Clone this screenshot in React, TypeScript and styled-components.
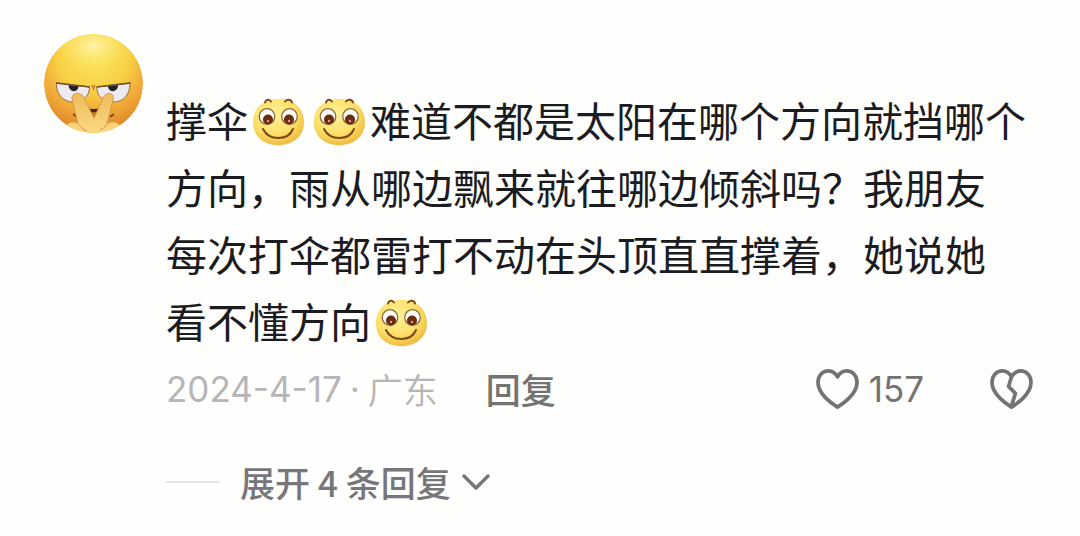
import React from "react";
import styled, { createGlobalStyle } from "styled-components";

const GlobalStyle = createGlobalStyle`
  *, *::before, *::after { box-sizing: border-box; }
  body {
    margin: 0;
    background: #fefefd;
    font-family: Inter, "Noto Sans CJK SC", sans-serif;
  }
`;

const Comment = styled.article`
  display: flex;
  align-items: flex-start;
  gap: 22px;
  padding: 34px 47px 28px 44px;
`;

const Avatar = styled.svg`
  flex: none;
  width: 100px;
  height: 100px;
`;

const Content = styled.div`
  flex: 1;
  min-width: 0;
  padding-top: 52px;
`;

const Message = styled.p`
  margin: 0;
  color: #1b1c22;
  font-family: "Noto Sans CJK SC", sans-serif;
  font-size: 41px;
  line-height: 67px;
  white-space: nowrap;
`;

const EmojiIcon = styled.svg`
  width: 61px;
  height: 52px;
  vertical-align: -10px;
`;

const Meta = styled.footer`
  display: flex;
  align-items: center;
  height: 70px;
  color: #737373;
  font-size: 35px;
  line-height: 52px;
`;

const Posted = styled.span`
  display: flex;
  gap: 8px;
  color: #b6b6b6;
  white-space: nowrap;
`;

const Place = styled.span`
  font-family: "Noto Sans CJK SC", sans-serif;
  font-weight: 350;
`;

const TextButton = styled.button`
  display: flex;
  align-items: center;
  padding: 0;
  border: 0;
  background: none;
  color: inherit;
  font-family: "Noto Sans CJK SC", sans-serif;
  font-size: 35px;
  font-weight: 500;
  line-height: 52px;
  white-space: nowrap;
  cursor: pointer;
`;

const ReplyButton = styled(TextButton)`
  margin-left: 48px;
`;

const Reactions = styled.div`
  display: flex;
  align-items: center;
  gap: 66px;
  margin-left: auto;
`;

const IconButton = styled.button`
  display: flex;
  align-items: center;
  gap: 10px;
  padding: 0;
  border: 0;
  background: none;
  color: #737373;
  font-family: inherit;
  font-size: 35px;
  cursor: pointer;
`;

const Thread = styled.div`
  display: flex;
  align-items: center;
  gap: 20px;
  height: 52px;
  margin-top: 32px;
  color: #77777b;
`;

const Rule = styled.span`
  width: 54px;
  height: 2px;
  background: #e6e6e6;
`;

const Chevron = styled.svg`
  margin-left: 10px;
`;

const Smile = () => (
  <EmojiIcon viewBox="0 0 61 52" role="img" aria-label="微笑">
    <defs>
      <radialGradient id="smileSkin" cx="0.42" cy="0.35" r="0.68">
        <stop offset="0" stopColor="#fff09a" />
        <stop offset="0.6" stopColor="#fde169" />
        <stop offset="1" stopColor="#efb93d" />
      </radialGradient>
    </defs>
    <ellipse cx="31" cy="29" rx="25" ry="22" fill="#e9dfcf" opacity="0.6" />
    <path d="M30 4C45 3 56 13 56 27C56 41 45 50 30 50C15 50 5 41 5 27C5 13 15 4 30 4Z" fill="url(#smileSkin)" />
    <g fill="none" stroke="#7b4a1c" strokeLinecap="round">
      <path d="M17 7.500C18 4 21 4 23 6.500M37 6.500C39 4 43 4 44 7.500" strokeWidth="2" />
      <path d="M15 34C21 46 40 46 45 34" strokeWidth="2" />
    </g>
    <g fill="#fffdf6" stroke="#8e6a3a" strokeWidth="1.300">
      <circle cx="19" cy="21.500" r="7.800" />
      <circle cx="41.500" cy="21.500" r="7.800" />
    </g>
    <g fill="#692b12">
      <circle cx="20" cy="24.500" r="5" />
      <circle cx="41" cy="24.500" r="5" />
    </g>
    <g fill="#d9a58a">
      <circle cx="20" cy="26" r="1.200" />
      <circle cx="41" cy="26" r="1.200" />
    </g>
  </EmojiIcon>
);

const AvatarPicture = () => (
  <Avatar viewBox="0 0 100 100" role="img" aria-label="头像">
    <defs>
      <radialGradient id="face" cx="0.5" cy="0.22" r="0.8">
        <stop offset="0" stopColor="#fbe763" />
        <stop offset="0.45" stopColor="#f8d044" />
        <stop offset="0.75" stopColor="#efa337" />
        <stop offset="1" stopColor="#d98126" />
      </radialGradient>
      <radialGradient id="shine" cx="0.5" cy="0.3" r="0.5">
        <stop offset="0" stopColor="#fff6b4" stopOpacity="0.9" />
        <stop offset="1" stopColor="#fbe04c" stopOpacity="0" />
      </radialGradient>
      <linearGradient id="hand" x1="0" y1="0" x2="0" y2="1">
        <stop offset="0" stopColor="#f0bb5a" />
        <stop offset="1" stopColor="#f9da84" />
      </linearGradient>
      <clipPath id="disc"><circle cx="49.500" cy="49.500" r="49.500" /></clipPath>
    </defs>
    <g clipPath="url(#disc)">
      <circle cx="49.500" cy="49.500" r="49.500" fill="url(#face)" />
      <ellipse cx="49.500" cy="22" rx="42" ry="26" fill="url(#shine)" />
      <path d="M12.500 49L45.500 53C46 62 38 68 29 68C19 68 12 60 12.500 49Z" fill="#efe9f2" stroke="#a26a32" strokeWidth="1" />
      <path d="M86 49L53 53C52 62 60 68 70 68C80 68 86 60 86 49Z" fill="#efe9f2" stroke="#a26a32" strokeWidth="1" />
      <path d="M24.500 51L34.500 52C34.500 59 25 59 24.500 51ZM64 52L74 51C74 59 64 59 64 52Z" fill="#252323" />
      <path d="M12 49L46 53M86.500 49L52.500 53" stroke="#6b5030" strokeWidth="1.500" />
      <path d="M48 51L49.500 55L51 51" fill="none" stroke="#c7812c" strokeWidth="1.500" />
      <path d="M41 74Q49.500 76 58 74L50 90Z" fill="#4d2510" />
      <path d="M44 80Q50 76 55 80L50 86Z" fill="#c5792b" />
      <path d="M29 80L33 83M70 80L66 83" stroke="#7f4617" strokeWidth="2" />
      <path d="M23 92C25 87 31 88 34 90L28 65C27 59 35 57 39 62L50 84L60 62C64 57 71 59 69 66L63 90C69 87 75 88 76 93V100H23Z" fill="url(#hand)" />
      <path d="M34 90L28 65C27 59 35 57 39 62L50 84L60 62C64 57 71 59 69 66L63 90" fill="none" stroke="#cf9440" strokeWidth="0.800" />
      <path d="M35 91Q39 96 43 97M63 90Q60 95 56 96" fill="none" stroke="#d79a3e" strokeWidth="1" />
    </g>
  </Avatar>
);

const heart = "M22 39C17 36 2 26 2 13.500C2 6.500 7 2 12.500 2C17 2 20 4.500 22 8C24 4.500 27 2 31.500 2C37 2 42 6.500 42 13.500C42 26 27 36 22 39Z";

const Heart = ({ broken = false }: { broken?: boolean }) => (
  <svg width="43" height="40" viewBox="0 0 44 41" fill="none" stroke="currentColor" strokeWidth="3.800" strokeLinejoin="round" aria-hidden="true">
    <path d={heart} />
    {broken && <path d="M22 8L19 18L26 25L22 38" />}
  </svg>
);

export default function App() {
  return (
    <>
      <GlobalStyle />
      <Comment>
        <AvatarPicture />
        <Content>
          <Message>
            撑伞<Smile /><Smile />难道不都是太阳在哪个方向就挡哪个<br />
            方向，雨从哪边飘来就往哪边倾斜吗？我朋友<br />
            每次打伞都雷打不动在头顶直直撑着，她说她<br />
            看不懂方向<Smile />
          </Message>
          <Meta>
            <Posted>
              <time dateTime="2024-04-17">2024-4-17</time>
              <span>·</span>
              <Place>广东</Place>
            </Posted>
            <ReplyButton type="button">回复</ReplyButton>
            <Reactions>
              <IconButton type="button" aria-label="赞 157"><Heart />157</IconButton>
              <IconButton type="button" aria-label="踩"><Heart broken /></IconButton>
            </Reactions>
          </Meta>
          <Thread>
            <Rule />
            <TextButton type="button" aria-expanded="false">
              展开 4 条回复
              <Chevron width="30" height="20" viewBox="0 0 30 20" fill="none" stroke="currentColor" strokeWidth="3.500" strokeLinecap="round" strokeLinejoin="round" aria-hidden="true">
                <path d="M3 4L15 16L27 4" />
              </Chevron>
            </TextButton>
          </Thread>
        </Content>
      </Comment>
    </>
  );
}
